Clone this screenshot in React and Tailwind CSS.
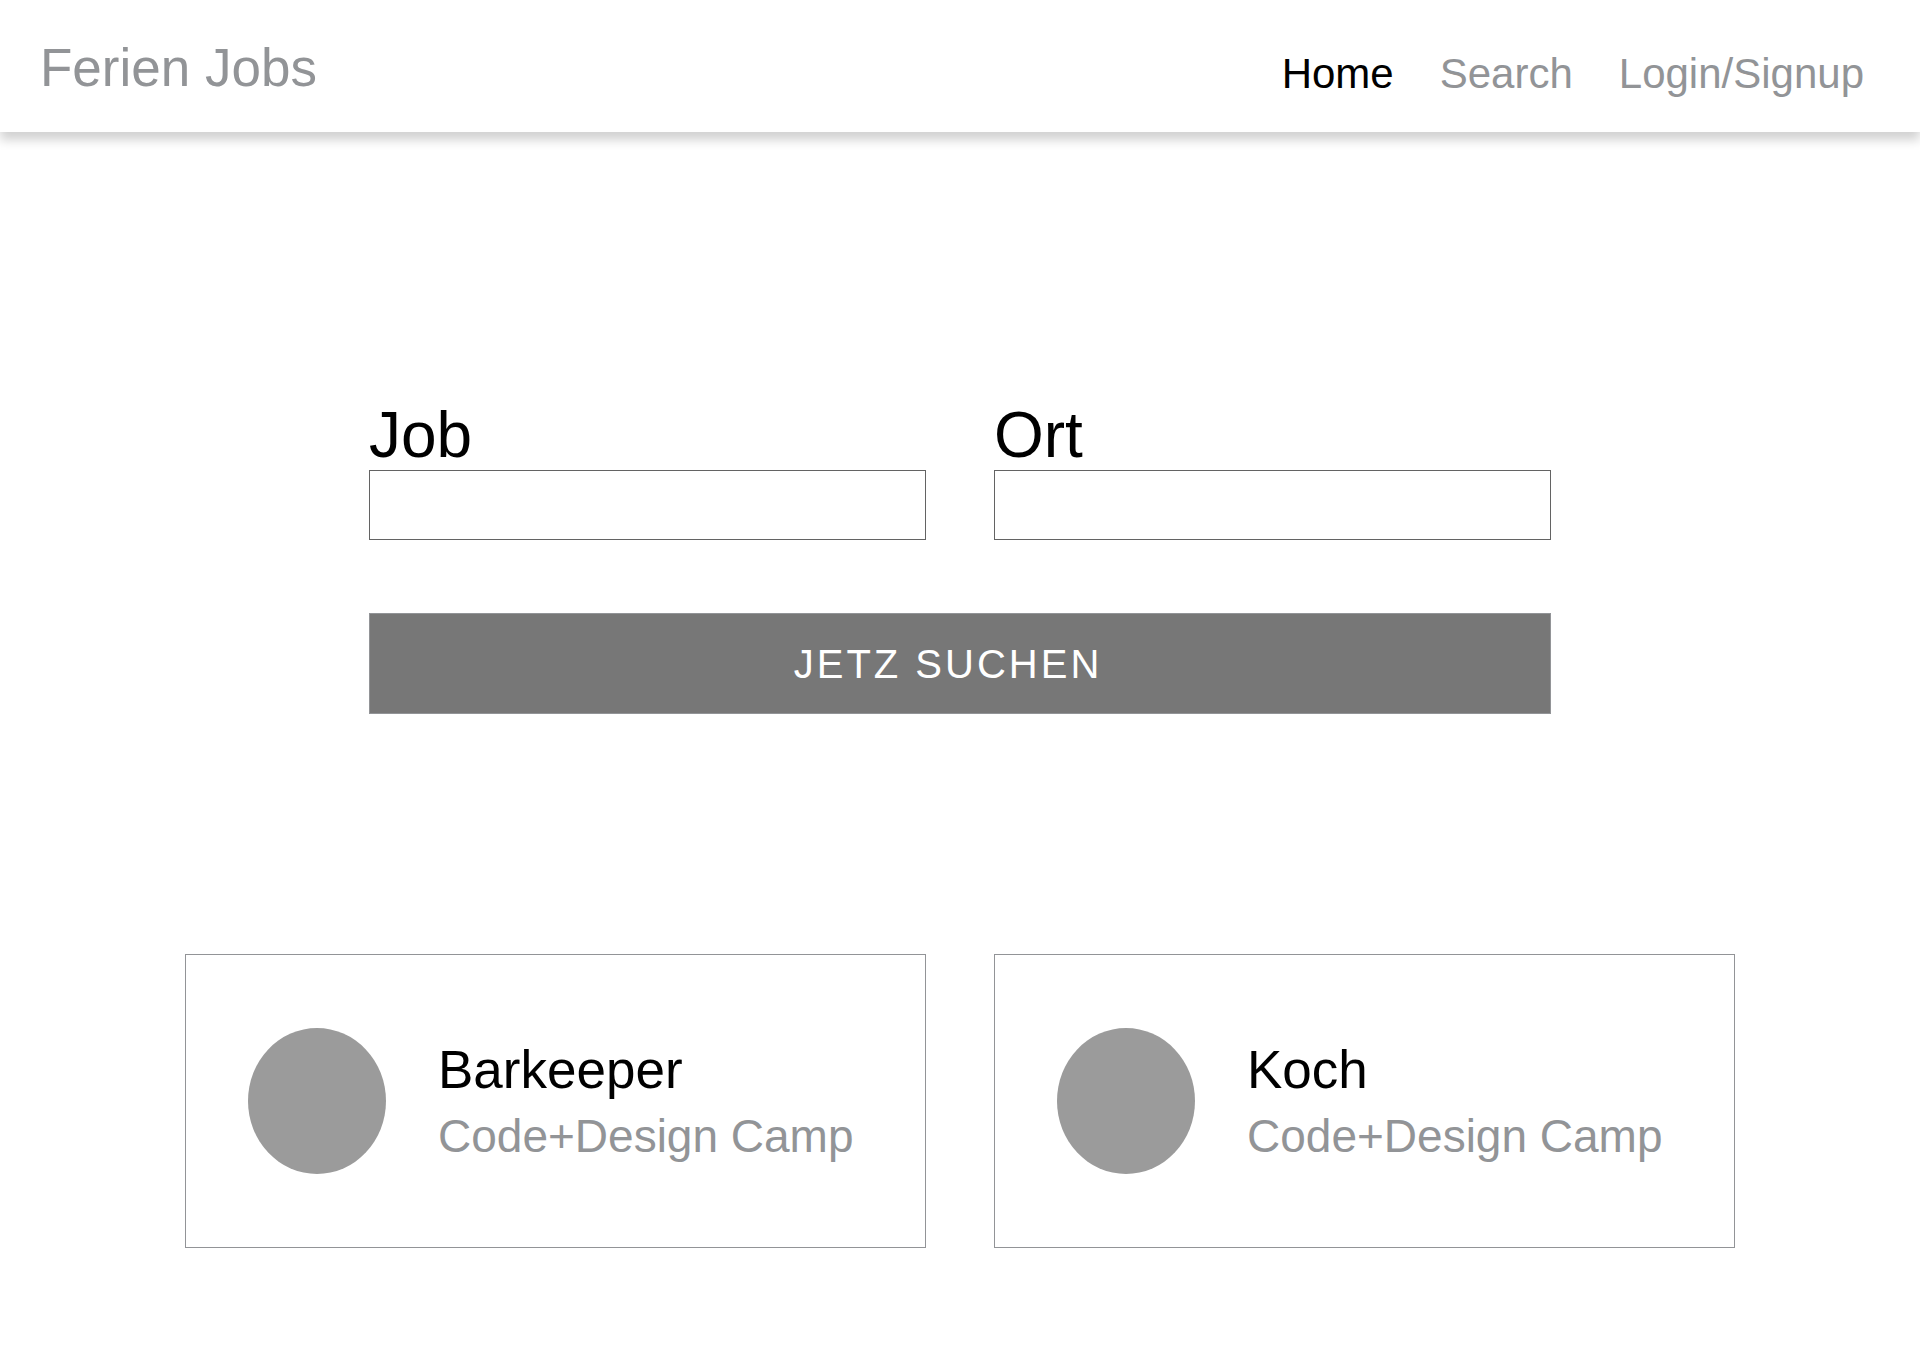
const jobs = [
  { title: "Barkeeper", company: "Code+Design Camp" },
  { title: "Koch", company: "Code+Design Camp" },
];

function Field({ id, label }) {
  return (
    <div className="flex min-w-0 flex-1 flex-col">
      <label htmlFor={id} className="text-[64px] leading-[70px]">{label}</label>
      <input id={id} type="text" className="h-[70px] w-full border border-[#636363] bg-white px-4 text-[42px] outline-none" />
    </div>
  );
}

function JobCard({ title, company }) {
  return (
    <article className="flex min-w-0 flex-1 items-center gap-[52px] border border-[#929497] bg-white px-[62px] py-[73px]">
      <div className="h-[146px] w-[138px] shrink-0 rounded-[50%] bg-[#9b9b9b]" />
      <div className="pt-1 whitespace-nowrap">
        <h2 className="text-[53px] leading-[66px]">{title}</h2>
        <p className="text-[46px] leading-[66px] text-[#929497]">{company}</p>
      </div>
    </article>
  );
}

export default function App() {
  return (
    <div className="min-h-screen bg-white font-['Liberation_Sans',Arial,sans-serif] text-black">
      <header className="flex h-[132px] items-center justify-between bg-white pr-14 pl-10 shadow-[0_8px_10px_rgba(0,0,0,0.18)]">
        <a href="#" className="pt-1 text-[53px] leading-[60px] text-[#929497]">Ferien Jobs</a>
        <nav className="flex gap-[46px] pt-4 text-[42px] leading-[48px] text-[#929497]">
          <a href="#home" className="text-black">Home</a>
          <a href="#search">Search</a>
          <a href="#login">Login/Signup</a>
        </nav>
      </header>
      <main className="px-[185px]">
        <form className="px-[184px] pt-[268px]">
          <div className="flex gap-[68px]">
            <Field id="job" label="Job" />
            <Field id="ort" label="Ort" />
          </div>
          <button type="button" className="mt-[73px] h-[101px] w-full border border-[#929497] bg-[#777777] pr-6 text-[40px] tracking-[3px] text-white">JETZ SUCHEN</button>
        </form>
        <section className="mt-[240px] flex gap-[68px]">
          {jobs.map((job) => <JobCard key={job.title} {...job} />)}
        </section>
      </main>
    </div>
  );
}
